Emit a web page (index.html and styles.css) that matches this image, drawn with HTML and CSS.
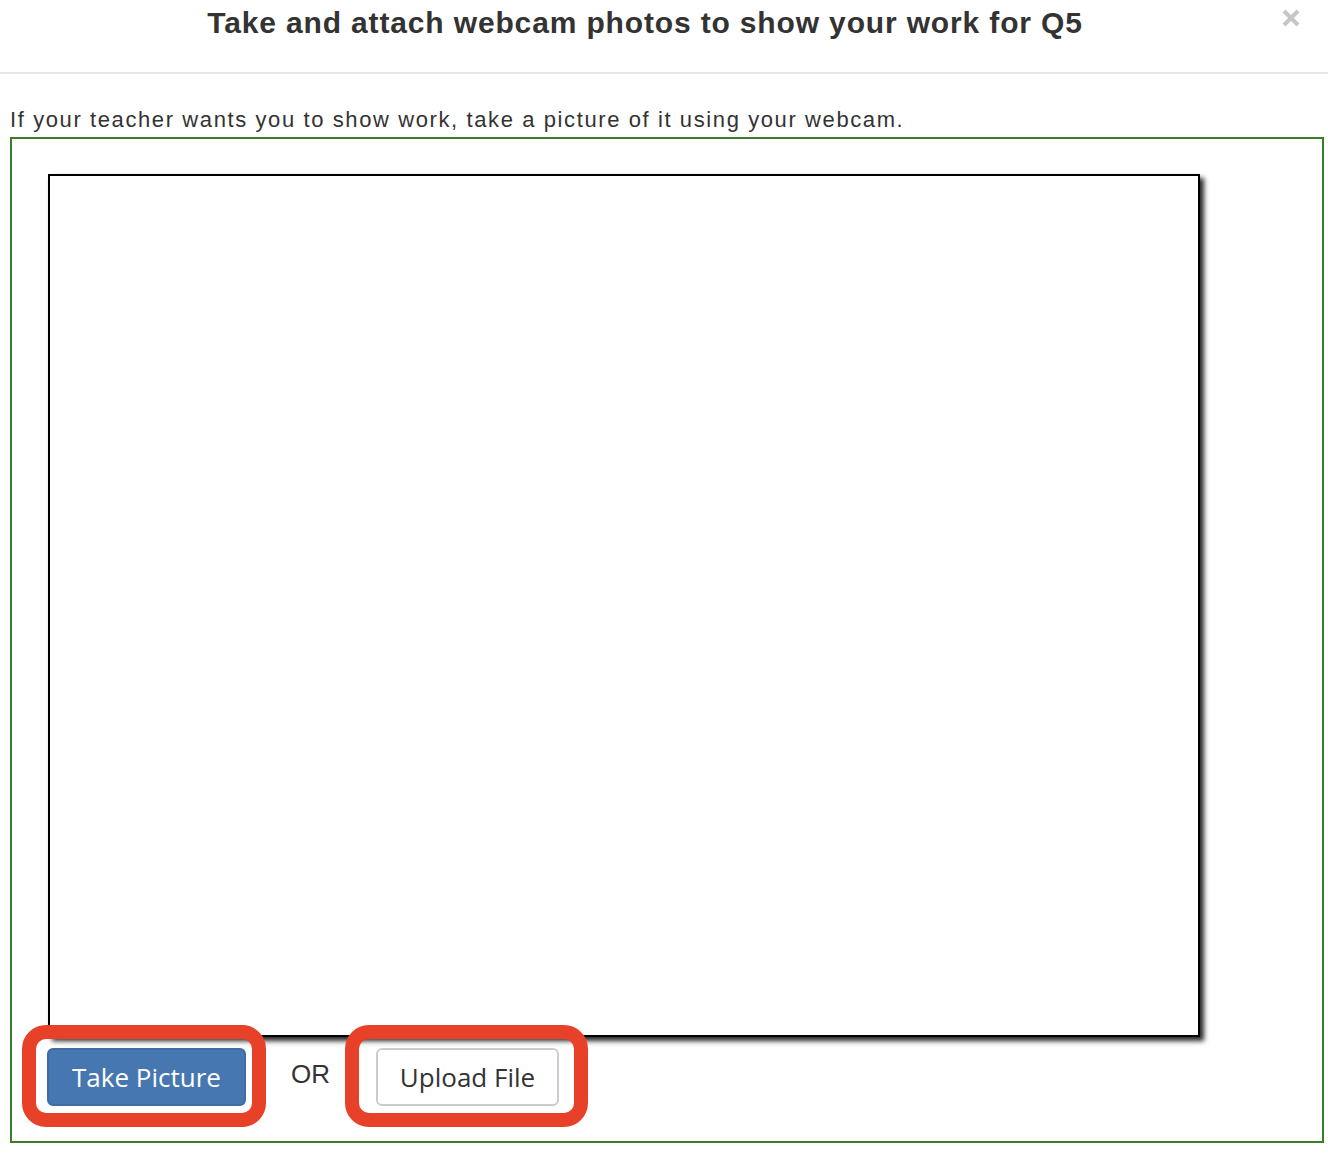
FILE: index.html
```html
<!DOCTYPE html>
<html lang="en">
<head>
<meta charset="utf-8">
<title>Webcam photos</title>
<link rel="stylesheet" href="styles.css">
</head>
<body>
<div class="modal-header">
  <h4 class="modal-title">Take and attach webcam photos to show your work for Q5</h4>
  <button class="close" type="button" aria-label="Close">
    <svg width="18" height="18" viewBox="0 0 18 18"><path d="M2 2 L16 16 M16 2 L2 16" stroke="#c6c6c6" stroke-width="4" fill="none"/></svg>
  </button>
</div>
<div class="modal-body">
  <p class="intro">If your teacher wants you to show work, take a picture of it using your webcam.</p>
  <div class="capture-panel">
    <div class="webcam"></div>
    <div class="actions">
      <span class="mark mark-take"><button class="btn btn-primary" type="button">Take Picture</button></span>
      <span class="or">OR</span>
      <span class="mark mark-upload"><button class="btn btn-default" type="button">Upload File</button></span>
    </div>
  </div>
</div>
</body>
</html>
```
FILE: styles.css
```css
html, body {
  margin: 0;
  padding: 0;
  background: #ffffff;
}
body {
  width: 1328px;
  font-family: "Liberation Sans", Arial, sans-serif;
  color: #333333;
}
.modal-header {
  position: relative;
  height: 72px;
  border-bottom: 2px solid #e5e5e5;
  display: flex;
  justify-content: center;
  align-items: flex-start;
  padding-right: 38px;
}
.modal-title {
  margin: 0;
  padding-top: 5px;
  font-size: 30px;
  line-height: 36px;
  font-weight: 700;
  letter-spacing: 0.85px;
  color: #333333;
}
.close {
  position: absolute;
  top: 9px;
  right: 28px;
  padding: 0;
  margin: 0;
  border: 0;
  background: transparent;
  width: 18px;
  height: 18px;
  display: flex;
}
.modal-body {
  padding: 0 4px 0 10px;
}
.intro {
  margin: 33px 0 4px 0;
  font-size: 22px;
  line-height: 26px;
  letter-spacing: 1.6px;
  color: #333333;
}
.capture-panel {
  border: 2px solid #3b7d27;
  padding: 35px 0 35px 36px;
}
.webcam {
  box-sizing: border-box;
  width: 1152px;
  height: 863px;
  border: 2px solid #000000;
  background: #ffffff;
  box-shadow: 4px 4px 5px rgba(0, 0, 0, 0.85);
}
.actions {
  display: flex;
  align-items: center;
  margin-top: 11px;
  margin-left: -1px;
}
.mark {
  position: relative;
  display: inline-flex;
}
.mark::before {
  content: "";
  position: absolute;
  border: 14px solid #e8412a;
  border-radius: 24px;
  pointer-events: none;
}
.mark-take::before {
  left: -25px;
  right: -20px;
  top: -23px;
  bottom: -21px;
}
.mark-upload::before {
  left: -31px;
  right: -29px;
  top: -23px;
  bottom: -21px;
}
.btn {
  box-sizing: border-box;
  height: 58px;
  border-radius: 6px;
  font-family: "Open Sans", "DejaVu Sans", sans-serif;
  font-size: 26px;
  line-height: 1;
  padding: 0;
  margin: 0;
  display: flex;
  align-items: center;
  justify-content: center;
}
.btn-primary {
  width: 199px;
  background: #4677b0;
  border: 2px solid #3f6ca3;
  color: #ffffff;
}
.btn-default {
  width: 183px;
  background: #ffffff;
  border: 2px solid #cccccc;
  color: #333333;
}
.or {
  margin: 0 46px 0 45px;
  font-family: "Liberation Sans", Arial, sans-serif;
  font-size: 26px;
  color: #333333;
  position: relative;
  top: -3px;
}
```
